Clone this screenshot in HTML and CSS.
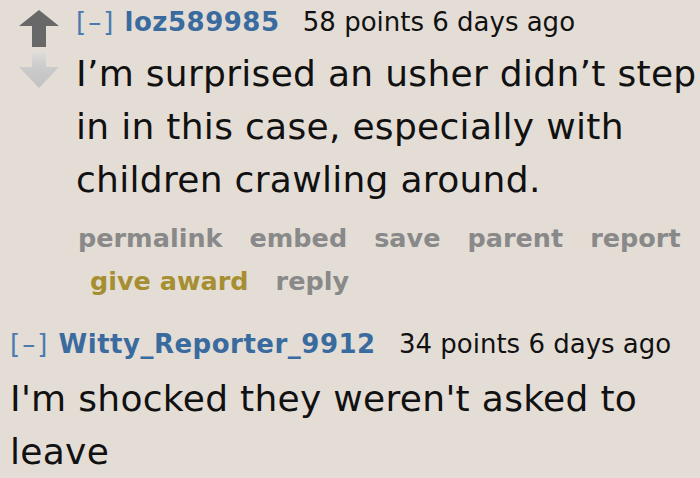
FILE: index.html
```html
<!DOCTYPE html>
<html lang="en">
<head>
    <meta charset="UTF-8">
    <meta name="viewport" content="width=device-width, initial-scale=1.0">
    <title>Comments</title>
    <link rel="stylesheet" href="styles.css">
</head>
<body>
    <div class="comment">
        <div class="midcol">
            <svg class="arrow" width="40" height="37" viewBox="0 0 40 37">
                <polygon points="20,0 40,16 27,16 27,37 13,37 13,16 0,16" fill="#686868"/>
            </svg>
            <svg class="arrow down" width="40" height="38" viewBox="0 0 40 38">
                <defs>
                    <linearGradient id="fade" x1="0" y1="0" x2="0" y2="1">
                        <stop offset="0" stop-color="#e2dfdc"/>
                        <stop offset="0.45" stop-color="#cbcbcb"/>
                        <stop offset="1" stop-color="#c2c2c2"/>
                    </linearGradient>
                </defs>
                <polygon points="13,0 27,0 27,17 40,17 20,38 0,17 13,17" fill="url(#fade)"/>
            </svg>
        </div>
        <div class="entry">
            <p class="tagline">
                <a href="#" class="expand">[–]</a>
                <a href="#" class="author">loz589985</a>
                <span class="score">58 points</span> <time>6 days ago</time>
            </p>
            <div class="md">
                <p>I’m surprised an usher didn’t step in in this case, especially with children crawling around.</p>
            </div>
            <ul class="buttons">
                <li><a href="#">permalink</a></li>
                <li><a href="#">embed</a></li>
                <li><a href="#">save</a></li>
                <li><a href="#">parent</a></li>
                <li><a href="#">report</a></li>
                <li><a href="#" class="award">give award</a></li>
                <li><a href="#">reply</a></li>
            </ul>
        </div>
    </div>

    <div class="comment second">
        <div class="entry">
            <p class="tagline">
                <a href="#" class="expand">[–]</a>
                <a href="#" class="author">Witty_Reporter_9912</a>
                <span class="score">34 points</span> <time>6 days ago</time>
            </p>
            <div class="md">
                <p>I'm shocked they weren't asked to leave</p>
            </div>
        </div>
    </div>
</body>
</html>
```

FILE: styles.css
```css
body {
    font-family: "DejaVu Sans", Verdana, sans-serif;
    background-color: #e4ddd6;
    color: #111111;
    margin: 0;
    padding: 0;
    overflow: hidden;
}

a {
    text-decoration: none;
}

.comment {
    display: flex;
    padding-top: 4px;
}

.midcol {
    display: flex;
    flex-direction: column;
    gap: 3px;
    width: 40px;
    margin-left: 19px;
    margin-top: 6px;
}

.arrow {
    display: block;
}

.entry {
    margin-left: 17px;
    flex: 1;
    min-width: 0;
}

.tagline {
    margin: 0;
    font-size: 26px;
    line-height: 36px;
    white-space: nowrap;
}

.expand {
    color: #4a7bb0;
    letter-spacing: 2px;
    margin-right: 1px;
}

.author {
    color: #3a6b9f;
    font-weight: bold;
    letter-spacing: 0.5px;
    margin-right: 15px;
}

.md p {
    margin: 7px 0 0 0;
    font-size: 36px;
    line-height: 53px;
    letter-spacing: 0.3px;
}

.buttons {
    list-style: none;
    margin: 11px 0 0 0;
    padding: 0 0 0 2px;
    display: flex;
    flex-wrap: wrap;
    column-gap: 15px;
}

.buttons li {
    padding-left: 12px;
    font-size: 25.5px;
    line-height: 43px;
    font-weight: bold;
}

.buttons li:first-child {
    padding-left: 0;
}

.buttons a {
    color: #898989;
}

.buttons a.award {
    color: #a68f32;
}

/* second comment sits flush left, no vote arrows */
.comment.second {
    margin-top: 19px;
}

.comment.second .entry {
    margin-left: 10px;
}

.comment.second .md p {
    margin-top: 10px;
}
```
